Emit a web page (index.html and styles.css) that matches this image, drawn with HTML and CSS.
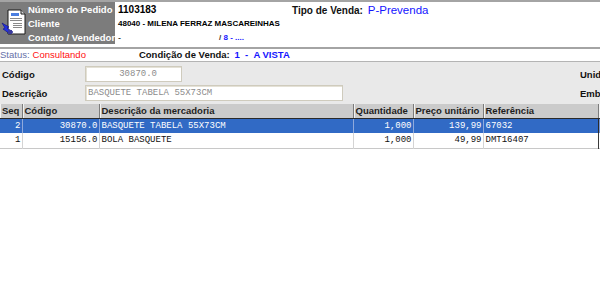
FILE: index.html
```html
<!DOCTYPE html>
<html>
<head>
<meta charset="utf-8">
<link rel="stylesheet" href="styles.css">
</head>
<body>
<div class="app">
  <header class="top">
    <div class="panel">
      <svg class="icon" width="26" height="30" viewBox="0 0 26 30">
        <path d="M7 3 H20 L24 7 V27 H7 Z" fill="#ffffff" stroke="#1a1a1a" stroke-width="1"/>
        <path d="M20 3 V7 H24" fill="#d8d8d8" stroke="#1a1a1a" stroke-width="1"/>
        <rect x="10" y="6" width="8" height="3" fill="#4a7ee0"/>
        <rect x="9" y="11" width="12" height="1" fill="#8a8a8a"/>
        <rect x="9" y="13" width="12" height="1" fill="#8a8a8a"/>
        <rect x="12" y="16" width="9" height="1" fill="#8a8a8a"/>
        <rect x="12" y="18" width="9" height="1" fill="#8a8a8a"/>
        <rect x="12" y="20" width="9" height="1" fill="#8a8a8a"/>
        <path d="M1 16 L8 20 L6 21 L12 25 L9 27 L2 22 L4 21 Z" fill="#2330e0" stroke="#101080" stroke-width="0.6"/>
        <rect x="7" y="23" width="4" height="4" fill="#3a3a9a"/>
      </svg>
      <div class="labels">
        <div class="lbl">Número do Pedido</div>
        <div class="lbl">Cliente</div>
        <div class="lbl">Contato / Vendedor</div>
      </div>
    </div>
    <div class="values">
      <div class="vrow">
        <span class="num">1103183</span>
        <span class="tipo"><b>Tipo de Venda:</b> <span class="blue big">P-Prevenda</span></span>
      </div>
      <div class="vrow"><span class="cli">48040 - MILENA FERRAZ MASCAREINHAS</span></div>
      <div class="vrow">
        <span class="cont">-</span>
        <span class="vend">/ <span class="blue">8 - ....</span></span>
      </div>
    </div>
  </header>
  <div class="status">
    <span class="st-lbl">Status:</span> <span class="st-val">Consultando</span>
    <span class="cond"><b>Condição de Venda:</b> <b class="blue">1&nbsp;&nbsp;-&nbsp;&nbsp;A VISTA</b></span>
  </div>
  <div class="form">
    <div class="frow">
      <span class="flbl">Código</span>
      <span class="box box-code">30870.0</span>
      <span class="spacer"></span>
      <span class="rlbl">Unid</span>
    </div>
    <div class="frow">
      <span class="flbl">Descrição</span>
      <span class="box box-desc">BASQUETE TABELA 55X73CM</span>
      <span class="spacer"></span>
      <span class="rlbl">Emb</span>
    </div>
  </div>
  <table class="grid">
    <colgroup>
      <col class="c-seq"><col class="c-cod"><col class="c-desc"><col class="c-qtd"><col class="c-pre"><col class="c-ref"><col class="c-end">
    </colgroup>
    <thead>
      <tr><th>Seq</th><th>Código</th><th>Descrição da mercadoria</th><th>Quantidade</th><th>Preço unitário</th><th>Referência</th><th class="end"></th></tr>
    </thead>
    <tbody>
      <tr class="sel"><td class="r">2</td><td class="r">30870.0</td><td>BASQUETE TABELA 55X73CM</td><td class="r">1,000</td><td class="r">139,99</td><td>67032</td><td class="end"></td></tr>
      <tr><td class="r">1</td><td class="r">15156.0</td><td>BOLA BASQUETE</td><td class="r">1,000</td><td class="r">49,99</td><td>DMT16407</td><td class="end"></td></tr>
    </tbody>
  </table>
</div>
</body>
</html>
```
FILE: styles.css
```css
html, body {
  margin: 0;
  width: 600px;
  height: 305px;
  overflow: hidden;
  background: #ffffff;
  font-family: "Liberation Sans", Arial, sans-serif;
}
.app { width: 600px; }

.top {
  display: flex;
  height: 45px;
  border-top: 2px solid #a4a4a4;
  border-bottom: 2px solid #a4a4a4;
}
.panel {
  display: flex;
  width: 115px;
  height: 42px;
  background: #7c7c7c;
}
.icon { margin: 5px 0 0 1px; flex: none; }
.labels { display: flex; flex-direction: column; padding-top: 1px; margin-left: 1px; }
.lbl {
  height: 14px;
  line-height: 14px;
  color: #ffffff;
  font-weight: bold;
  font-size: 9.5px;
  white-space: nowrap;
}
.values { flex: 1; display: flex; flex-direction: column; padding: 1px 0 0 3px; }
.vrow { height: 14px; line-height: 14px; display: flex; align-items: center; white-space: nowrap; }
.num { font-weight: bold; font-size: 10px; width: 174px; }
.tipo { font-size: 10px; }
.tipo b { color: #111; }
.blue { color: #1414ff; }
.big { font-size: 11.5px; margin-left: 2px; }
.cli { font-weight: bold; font-size: 8px; }
.cont { font-size: 9px; width: 101px; }
.vend { font-size: 8px; font-weight: bold; color: #333; }

.status {
  height: 12px;
  line-height: 12px;
  border-bottom: 1px solid #b4b4b4;
  font-size: 9.5px;
  white-space: nowrap;
  display: flex;
  align-items: center;
}
.st-lbl { color: #6670a8; }
.st-val { color: #ff1010; margin-left: 3px; }
.cond { margin-left: 53px; font-size: 9.5px; }
.cond b { color: #111; }
.cond b.blue { color: #1414ff; margin-left: 2px; }

.form {
  background: #e9e9e9;
  padding: 4px 0 3px 0;
  display: flex;
  flex-direction: column;
  gap: 3px;
}
.frow { display: flex; align-items: center; height: 16px; }
.flbl { width: 85px; padding-left: 2px; box-sizing: border-box; font-weight: bold; font-size: 9.5px; color: #111; }
.box {
  height: 16px;
  box-sizing: border-box;
  background: #ffffff;
  border: 1px solid #cfcbbd;
  box-shadow: inset 1px 1px 0 #e4e1d6;
  font-family: "Liberation Mono", "Courier New", monospace;
  font-size: 9px;
  color: #8c8c8c;
  line-height: 14px;
  white-space: nowrap;
}
.box-code { width: 97px; text-align: right; padding-right: 24px; }
.box-desc { width: 258px; padding-left: 2px; }
.spacer { flex: 1; }
.rlbl { width: 20px; font-weight: bold; font-size: 9.5px; color: #111; white-space: nowrap; overflow: hidden; }

.grid {
  border-collapse: collapse;
  table-layout: fixed;
  width: 600px;
  border-bottom: 1px solid #c8c8c8;
}
.c-seq { width: 22px; }
.c-cod { width: 77px; }
.c-desc { width: 254px; }
.c-qtd { width: 60px; }
.c-pre { width: 70px; }
.c-ref { width: 115px; }
.c-end { width: 2px; }
.grid th {
  height: 14px;
  padding: 0 0 0 2px;
  background: #cbcbcb;
  border-right: 1px solid #7c7c7c;
  border-bottom: 1px solid #2a2a2a;
  box-shadow: inset 1px 0 0 #f2f2f2;
  text-align: left;
  font-size: 9.5px;
  font-weight: bold;
  color: #1e1e1e;
  white-space: nowrap;
  overflow: hidden;
  box-sizing: border-box;
}
.grid th.end { border-right: none; background: #dcdcdc; }
.grid td {
  height: 15px;
  padding: 0 1px 0 2px;
  border-right: 1px solid #d4d4d4;
  font-family: "Liberation Mono", "Courier New", monospace;
  font-size: 9px;
  color: #111;
  white-space: nowrap;
  overflow: hidden;
  box-sizing: border-box;
}
.grid td.r { text-align: right; }
.grid td:nth-child(6) { border-right: 1px solid #3a3a3a; }
.grid td.end { border-right: none; padding: 0; }
.grid tr.sel td { background: #316ac5; color: #ffffff; border-right-color: #8fa9dc; }
.grid tr.sel td:nth-child(6) { border-right-color: #2a2a2a; }
.grid tr.sel td.end { background: #6f93d6; }
```
